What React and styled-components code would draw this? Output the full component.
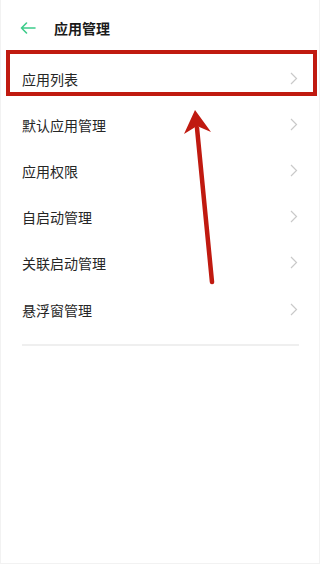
import React from 'react';
import styled, { createGlobalStyle } from 'styled-components';

const GlobalStyle = createGlobalStyle`
  html, body {
    margin: 0;
    padding: 0;
    background: #fff;
  }
  body {
    font-family: "Noto Sans CJK SC", "Noto Sans", sans-serif;
  }
`;

const Screen = styled.div`
  position: relative;
  width: 320px;
  height: 564px;
  box-sizing: border-box;
  border: 1px solid #f2f2f2;
  border-top: none;
  background: #fff;
  overflow: hidden;
`;

const Header = styled.div`
  display: flex;
  align-items: center;
  height: 55px;
  padding-left: 19px;
  box-sizing: border-box;
`;

const BackButton = styled.div`
  display: flex;
  align-items: center;
  width: 16px;
  height: 14px;
  margin-right: 18px;
`;

const Title = styled.h1`
  margin: 0;
  font-size: 14px;
  font-weight: 600;
  color: #1a1a1a;
`;

const List = styled.div`
  display: flex;
  flex-direction: column;
`;

const Row = styled.div`
  display: flex;
  align-items: center;
  justify-content: space-between;
  height: 46.2px;
  padding: 0 21px 0 21px;
  box-sizing: border-box;
`;

const Label = styled.span`
  font-size: 14px;
  color: #262626;
  padding-top: 1px;
`;

const Divider = styled.div`
  height: 2px;
  margin: 12px 20px 0 21px;
  background: #efefef;
`;

const Highlight = styled.div`
  position: absolute;
  left: 5px;
  top: 50px;
  width: 311px;
  height: 46px;
  box-sizing: border-box;
  border: 4.5px solid #c01a10;
`;

const Pointer = styled.svg`
  position: absolute;
  left: 0;
  top: 0;
  pointer-events: none;
`;

const Chevron = () => (
  <svg width="8" height="13" viewBox="0 0 8 13">
    <path d="M1 1 L6.5 6.5 L1 12" fill="none" stroke="#c9c9c9" strokeWidth="1.2" />
  </svg>
);

const items = ['应用列表', '默认应用管理', '应用权限', '自启动管理', '关联启动管理', '悬浮窗管理'];

export default function App() {
  return (
    <>
      <GlobalStyle />
      <Screen>
        <Header>
          <BackButton>
            <svg width="16" height="12" viewBox="0 0 16 12">
              <path
                d="M15 6 H1.5 M6.5 1 L1.5 6 L6.5 11"
                fill="none"
                stroke="#3dcc8a"
                strokeWidth="1.6"
                strokeLinecap="round"
                strokeLinejoin="round"
              />
            </svg>
          </BackButton>
          <Title>应用管理</Title>
        </Header>
        <List>
          {items.map((item) => (
            <Row key={item}>
              <Label>{item}</Label>
              <Chevron />
            </Row>
          ))}
        </List>
        <Divider />
        <Highlight />
        <Pointer width="320" height="564" viewBox="0 0 320 564">
          <line x1="211" y1="282" x2="196" y2="128" stroke="#c01a10" strokeWidth="4.5" strokeLinecap="round" />
          <path d="M194 110 L183 134 L196 126 L210 132 Z" fill="#c01a10" />
        </Pointer>
      </Screen>
    </>
  );
}
